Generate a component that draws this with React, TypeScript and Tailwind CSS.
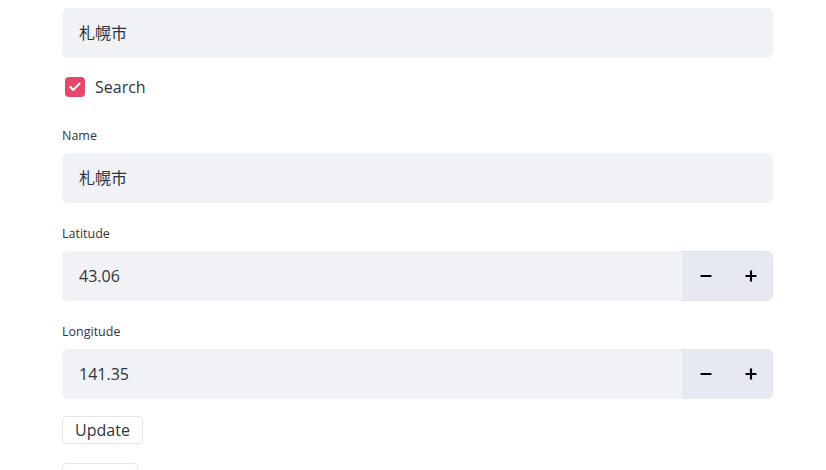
import { Check, Minus, Plus } from 'lucide-react'

const FONT = { fontFamily: '"Open Sans", "Noto Sans CJK JP", sans-serif' }

function Label({ children }: { children: string }) {
  return <div className="mb-[9px] h-[17px] text-[12.5px] leading-[17px] text-[#31333f]">{children}</div>
}

function TextInput({ value }: { value: string }) {
  return (
    <div className="flex h-[50px] items-center rounded-[6px] bg-[#f0f2f6] px-[17px] text-[16px] text-[#31333f]">
      {value}
    </div>
  )
}

function NumberInput({ value }: { value: string }) {
  return (
    <div className="flex h-[50px] overflow-hidden rounded-[6px] bg-[#f0f2f6] text-[16px] text-[#31333f]">
      <div className="flex flex-1 items-center px-[17px]">{value}</div>
      <div className="flex w-[91px] items-center bg-[#e6e9ef]">
        <button type="button" className="flex h-full flex-1 items-center justify-center pl-[2px] text-black">
          <Minus size={16} strokeWidth={3.2} />
        </button>
        <button type="button" className="flex h-full flex-1 items-center justify-center pl-[2px] text-black">
          <Plus size={16} strokeWidth={3.2} />
        </button>
      </div>
    </div>
  )
}

export default function App() {
  return (
    <div className="h-[470px] overflow-hidden bg-white" style={FONT}>
      <div className="ml-[62px] w-[711px] pt-[8px]">
        <TextInput value="札幌市" />

        <label className="mt-[19px] flex h-[20px] items-center gap-[10px] pl-[3px] text-[16px] text-[#31333f]">
          <span className="flex h-[20px] w-[20px] items-center justify-center rounded-[4px] bg-[#e4496c] text-white">
            <Check size={14} strokeWidth={3.5} />
          </span>
          Search
        </label>

        <div className="mt-[30px]">
          <Label>Name</Label>
          <TextInput value="札幌市" />
        </div>

        <div className="mt-[22px]">
          <Label>Latitude</Label>
          <NumberInput value="43.06" />
        </div>

        <div className="mt-[22px]">
          <Label>Longitude</Label>
          <NumberInput value="141.35" />
        </div>

        <button
          type="button"
          className="mt-[17px] flex h-[28px] w-[81px] items-center justify-center rounded-[4px] border border-[#e4e5ea] bg-white text-[16px] text-[#31333f]"
        >
          Update
        </button>
        <button
          type="button"
          aria-label="More"
          className="mt-[19px] flex h-[28px] w-[76px] items-center justify-center rounded-[4px] border border-[#e4e5ea] bg-white"
        />
      </div>
    </div>
  )
}
